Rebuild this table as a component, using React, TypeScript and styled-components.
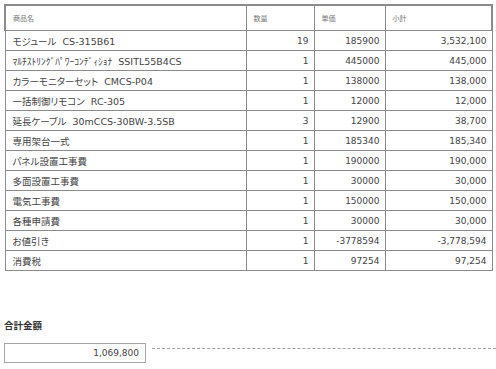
import React from "react";
import styled, { createGlobalStyle } from "styled-components";

const GlobalStyle = createGlobalStyle`
  body {
    margin: 0;
    background: #ffffff;
    font-family: "DejaVu Sans", "Noto Sans CJK JP", sans-serif;
    color: #444444;
  }
`;

type Item = { name: string; qty: number; price: number };

const items: Item[] = [
  { name: "モジュール  CS-315B61", qty: 19, price: 185900 },
  { name: "ﾏﾙﾁｽﾄﾘﾝｸﾞﾊﾟﾜｰｺﾝﾃﾞｨｼｮﾅ  SSITL55B4CS", qty: 1, price: 445000 },
  { name: "カラーモニターセット  CMCS-P04", qty: 1, price: 138000 },
  { name: "一括制御リモコン  RC-305", qty: 1, price: 12000 },
  { name: "延長ケーブル  30mCCS-30BW-3.5SB", qty: 3, price: 12900 },
  { name: "専用架台一式", qty: 1, price: 185340 },
  { name: "パネル設置工事費", qty: 1, price: 190000 },
  { name: "多面設置工事費", qty: 1, price: 30000 },
  { name: "電気工事費", qty: 1, price: 150000 },
  { name: "各種申請費", qty: 1, price: 30000 },
  { name: "お値引き", qty: 1, price: -3778594 },
  { name: "消費税", qty: 1, price: 97254 },
];

const total = items.reduce((sum, it) => sum + it.qty * it.price, 0);

const App = () => {
  return (
    <Page>
      <GlobalStyle />
      <Table>
        <colgroup>
          <col style={{ width: 241 }} />
          <col style={{ width: 68 }} />
          <col style={{ width: 71 }} />
          <col style={{ width: 107 }} />
        </colgroup>
        <thead>
          <tr>
            <Th>商品名</Th>
            <Th>数量</Th>
            <Th>単価</Th>
            <Th>小計</Th>
          </tr>
        </thead>
        <tbody>
          {items.map((it) => (
            <tr key={it.name}>
              <NameCell>{it.name}</NameCell>
              <NumCell>{it.qty}</NumCell>
              <NumCell>{it.price}</NumCell>
              <NumCell>{(it.qty * it.price).toLocaleString("en-US")}</NumCell>
            </tr>
          ))}
        </tbody>
      </Table>

      <TotalLabel>合計金額</TotalLabel>
      <TotalRow>
        <TotalBox>{total.toLocaleString("en-US")}</TotalBox>
        <Dashed />
      </TotalRow>
    </Page>
  );
};

export default App;

const Page = styled.div`
  padding: 4px 0 0 4px;
`;

const Table = styled.table`
  width: 487px;
  table-layout: fixed;
  border-collapse: collapse;
`;

const Th = styled.th`
  height: 24px;
  padding: 0 0 0 7px;
  border: 1px solid #8c8c8c;
  border-top: 2px solid #8c8c8c;
  text-align: left;
  font-weight: normal;
  font-size: 7px;
  color: #777777;
  font-family: "Noto Sans CJK JP", sans-serif;

  &:first-child {
    border-left: 2px solid #8c8c8c;
  }
  &:last-child {
    border-right: 2px solid #8c8c8c;
  }
`;

const Cell = styled.td`
  height: 19px;
  padding: 0;
  border: 1px solid #8c8c8c;
  white-space: pre;
  overflow: hidden;
`;

const NameCell = styled(Cell)`
  padding-left: 7px;
  font-size: 9.5px;
  font-feature-settings: "palt";
  color: #444444;
`;

const NumCell = styled(Cell)`
  padding-right: 5px;
  text-align: right;
  font-size: 9px;
  color: #444444;
`;

const TotalLabel = styled.div`
  margin-top: 47px;
  font-size: 9.5px;
  font-weight: bold;
  color: #333333;
  font-family: "Noto Sans CJK JP", sans-serif;
`;

const TotalRow = styled.div`
  display: flex;
  align-items: flex-start;
  margin-top: 11px;
`;

const TotalBox = styled.div`
  box-sizing: border-box;
  width: 142px;
  height: 20px;
  padding-right: 6px;
  border: 1px solid #a6a6a6;
  display: flex;
  align-items: center;
  justify-content: flex-end;
  font-size: 9px;
  color: #444444;
`;

const Dashed = styled.div`
  flex: 1;
  margin: 5px 0 0 6px;
  border-top: 1px dashed #a0a0a0;
`;
